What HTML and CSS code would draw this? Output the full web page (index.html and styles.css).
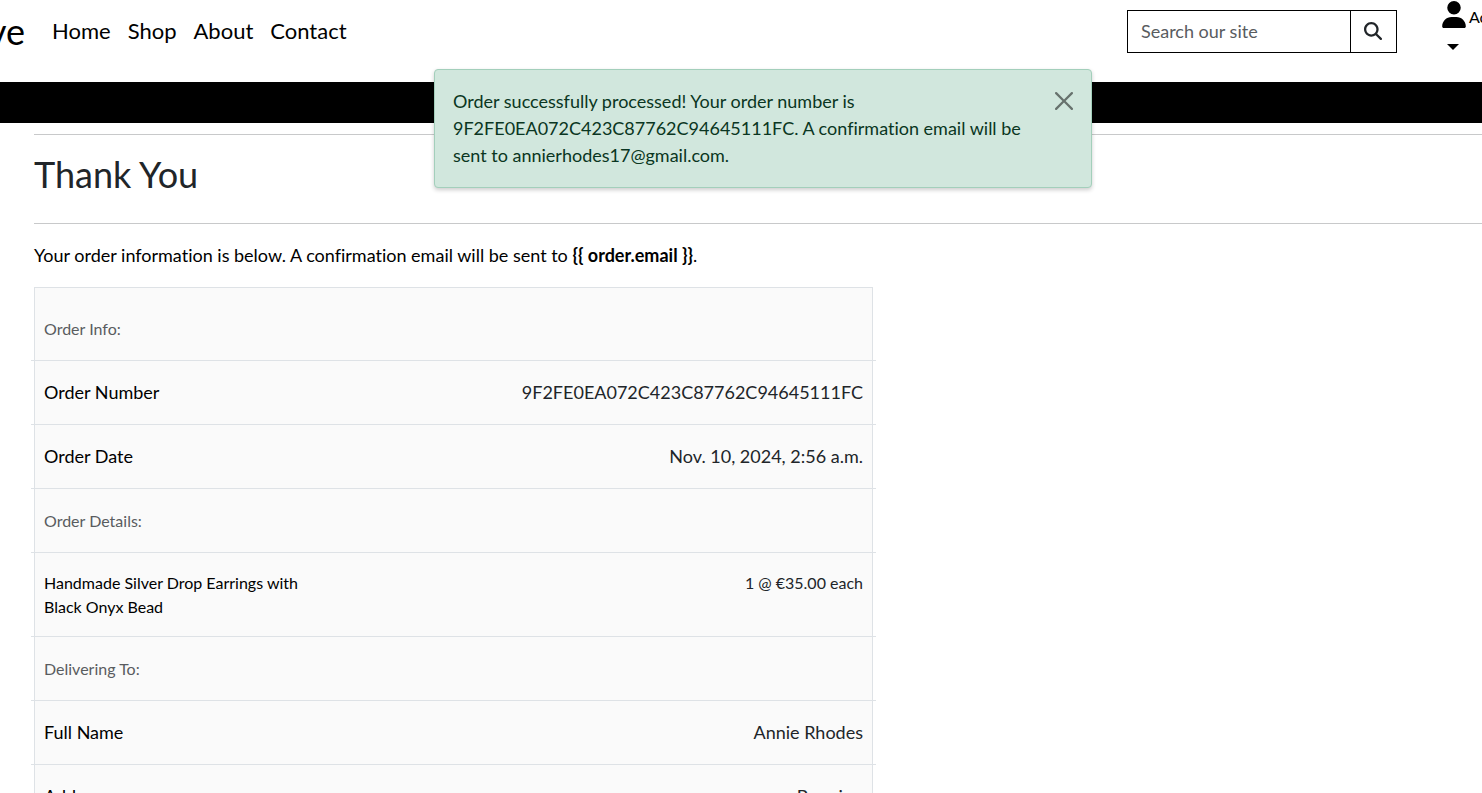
FILE: index.html
```html
<!DOCTYPE html>
<html lang="en">
<head>
<meta charset="utf-8">
<meta name="viewport" content="width=device-width, initial-scale=1">
<title>Thank You</title>
<link rel="stylesheet" href="styles.css">
</head>
<body>
<header class="site-header">
  <div class="header-left">
    <a class="brand" href="#">ve</a>
    <nav class="main-nav">
      <a href="#">Home</a>
      <a href="#">Shop</a>
      <a href="#">About</a>
      <a href="#">Contact</a>
    </nav>
  </div>
  <div class="header-right">
    <form class="search">
      <input type="text" aria-label="Search our site" placeholder="Search our site">
      <button type="button" aria-label="Search">
        <svg width="18" height="18" viewBox="0 0 512 512"><path fill="currentColor" d="M416 208c0 45.900-14.900 88.300-40 122.700L502.600 457.400c12.500 12.500 12.500 32.800 0 45.300s-32.800 12.500-45.300 0L330.700 376c-34.400 25.200-76.800 40-122.700 40C93.100 416 0 322.900 0 208S93.100 0 208 0S416 93.100 416 208zM208 352a144 144 0 1 0 0-288 144 144 0 1 0 0 288z"/></svg>
      </button>
    </form>
    <a class="account" href="#">
      <span class="account-line">
        <svg width="24" height="27" viewBox="0 0 448 512"><path fill="currentColor" d="M224 256A128 128 0 1 0 224 0a128 128 0 1 0 0 256zm-45.700 48C79.800 304 0 383.800 0 482.300C0 498.700 13.300 512 29.700 512H418.300c16.400 0 29.700-13.300 29.700-29.700C448 383.800 368.200 304 269.700 304H178.300z"/></svg>
        <span>Account</span>
      </span>
      <span class="caret"></span>
    </a>
  </div>
</header>
<div class="banner"></div>
<div class="toast" role="alert">
  <p>Order successfully processed! Your order number is 9F2FE0EA072C423C87762C94645111FC. A confirmation email will be sent to annierhodes17@gmail.com.</p>
  <button type="button" aria-label="Close">
    <svg width="18" height="18" viewBox="0 0 16 16"><path fill="currentColor" d="M.293.293a1 1 0 0 1 1.414 0L8 6.586 14.293.293a1 1 0 1 1 1.414 1.414L9.414 8l6.293 6.293a1 1 0 0 1-1.414 1.414L8 9.414l-6.293 6.293a1 1 0 0 1-1.414-1.414L6.586 8 .293 1.707a1 1 0 0 1 0-1.414z"/></svg>
  </button>
</div>
<main class="content">
  <h1>Thank You</h1>
  <p class="intro">Your order information is below. A confirmation email will be sent to <strong>{{ order.email }}</strong>.</p>
  <section class="order">
    <div class="row heading first">Order Info:</div>
    <div class="row"><span class="label">Order Number</span><span>9F2FE0EA072C423C87762C94645111FC</span></div>
    <div class="row"><span class="label">Order Date</span><span>Nov. 10, 2024, 2:56 a.m.</span></div>
    <div class="row heading">Order Details:</div>
    <div class="row item"><span class="label">Handmade Silver Drop Earrings with Black Onyx Bead</span><span>1 @ €35.00 each</span></div>
    <div class="row heading">Delivering To:</div>
    <div class="row"><span class="label">Full Name</span><span>Annie Rhodes</span></div>
    <div class="row"><span class="label">Address</span><span>Bunnion</span></div>
  </section>
</main>
</body>
</html>
```

FILE: styles.css
```css
* { box-sizing: border-box; }

html, body { overflow: hidden; }

body {
  margin: 0;
  height: 100vh;
  background: #fff;
  color: #212529;
  font: 18px/27px Lato, sans-serif;
  font-variant-ligatures: no-common-ligatures;
}

a { color: #000; text-decoration: none; }

.site-header {
  display: flex;
  justify-content: space-between;
  height: 82px;
}

.header-left { display: flex; align-items: center; height: 61px; }

.brand { width: 25px; display: flex; justify-content: flex-end; font-size: 36px; line-height: 54px; }

.main-nav { display: flex; gap: 17px; margin-left: 27px; font-size: 22px; }

.header-right { display: flex; gap: 45px; }

.search { display: flex; width: 270px; height: 43px; margin-top: 10px; }

.search input {
  flex: 1;
  min-width: 0;
  padding: 0 13px;
  border: 1px solid #000;
  border-radius: 0;
  color: #212529;
  font: inherit;
}

.search input::placeholder { color: #595c5f; }

.search button {
  display: flex;
  align-items: center;
  justify-content: center;
  width: 46px;
  padding: 0 1px 1px 0;
  border: 1px solid #000;
  border-left: 0;
  background: #fff;
  color: #212529;
}

.account { width: 40px; font-size: 16px; line-height: 24px; }

.account-line { display: flex; gap: 3px; padding-top: 1px; }

.account-line svg { flex: none; }

.account-line span { padding-top: 4px; }

.caret {
  display: block;
  width: 12px;
  margin: 15px 0 0 5px;
  border: 6px solid transparent;
  border-top-color: #000;
  border-bottom: 0;
}

.banner { height: 41px; background: #000; }

.toast {
  position: absolute;
  top: 69px;
  left: 434px;
  display: flex;
  justify-content: space-between;
  width: 658px;
  padding: 18px;
  border: 1px solid #a3cfbb;
  border-radius: 4px;
  background: #d1e7dd;
  color: #0a3622;
  box-shadow: 0 2px 4px rgba(0, 0, 0, 0.2);
}

.toast p { width: 582px; margin: 0; }

.toast button {
  display: flex;
  align-self: flex-start;
  padding: 4px 0;
  border: 0;
  background: none;
  color: #000;
  opacity: 0.5;
}

.content { margin: 11px 0 0 34px; }

h1 {
  margin: 0;
  padding: 17px 0 27px;
  border: 1px solid #c8c9ca;
  border-width: 1px 0;
  font-size: 36px;
  line-height: 44px;
  font-weight: 400;
}

.intro { margin: 18px 0; color: #000; }

.order {
  width: 839px;
  border: 1px solid #dee2e6;
  background: #fafafa;
}

.row {
  display: flex;
  justify-content: space-between;
  margin: 0 -4px;
  padding: 18px 13px;
  border-bottom: 1px solid #dee2e6;
}

.label { color: #000; }

.heading { color: #595c5f; font-size: 16px; }

.first { padding-top: 27px; }

.item { padding-bottom: 17px; font-size: 16px; line-height: 24px; }

.item .label { width: 260px; }
```
